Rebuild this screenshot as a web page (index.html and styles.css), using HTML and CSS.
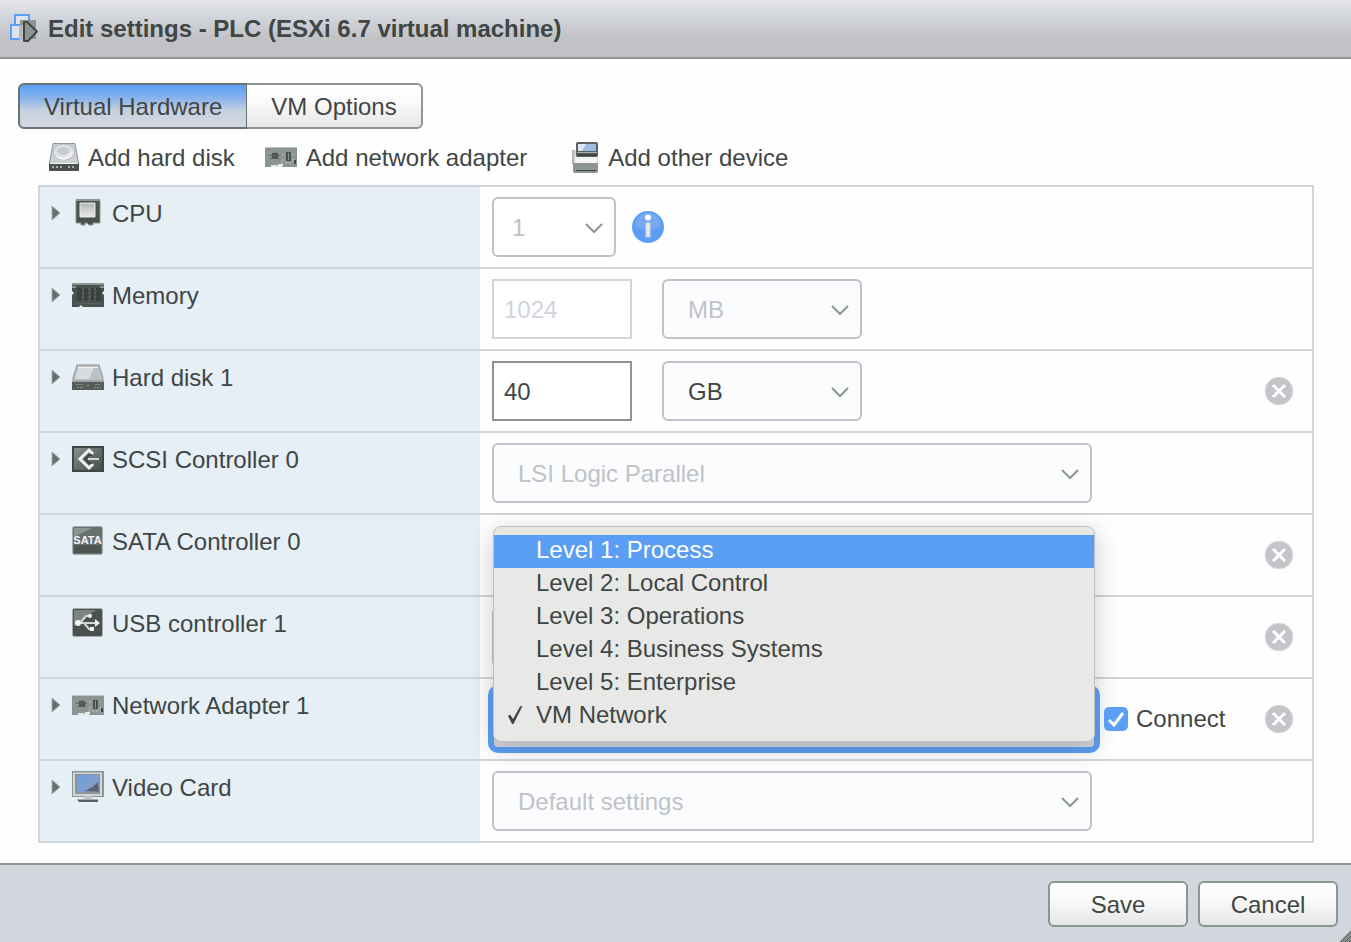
FILE: index.html
```html
<!DOCTYPE html>
<html lang="en">
<head>
<meta charset="utf-8">
<title>Edit settings - PLC</title>
<link rel="stylesheet" href="styles.css">
</head>
<body>
<svg class="sprite" aria-hidden="true">
  <defs>
    <linearGradient id="silver" x1="0" y1="0" x2="0" y2="1"><stop offset="0" stop-color="#b4b8b9"/><stop offset="1" stop-color="#e8e8e8"/></linearGradient>
    <linearGradient id="dark" x1="0" y1="0" x2="1" y2="1"><stop offset="0" stop-color="#8d9593"/><stop offset="1" stop-color="#3f4644"/></linearGradient>
    <linearGradient id="screen" x1="0" y1="0" x2="1" y2="1"><stop offset="0" stop-color="#6d9de0"/><stop offset=".6" stop-color="#7f9fcc"/><stop offset="1" stop-color="#6b7787"/></linearGradient>
    <symbol id="i-caret" viewBox="0 0 10 16"><path d="M1 1 9 8 1 15Z" fill="#686e6d" stroke="#a5abae"/></symbol>
    <symbol id="i-nic" viewBox="0 0 32 20">
      <path d="M0 0H32V20H17V18H13L12 20H0Z" fill="#8d9593"/><path d="M0 .5H32" stroke="#c0c3c6"/>
      <path d="M6 19H12M13 18H18" stroke="#e8e8e8" stroke-width="2"/>
      <path d="M7 6H13V11H7ZM21 5H26V14H21Z" fill="#4a514f"/><path d="M4 8.500H15M10 5V12M5 11.500H14" stroke="#5b6260"/>
      <path d="M18 6V8M18 12V14M28 7V8M28 12V15M16 16H30" stroke="#c0c3c6" stroke-dasharray="2 2"/><path d="M23.500 6V13" stroke="#8d9593"/><path d="M30 13V17" stroke="#3f4644" stroke-width="2"/>
    </symbol>
    <symbol id="i-disk" viewBox="0 0 32 26">
      <path d="M5 1H27L31 14V17H1V14Z" fill="#bdc0c4" stroke="#8d9593"/><path d="M7 3H22L17 15H3Z" fill="#d9dcdf"/><path d="M6 3.500H26" stroke="#f0f0f0"/>
      <path d="M0 17H32V26H0Z" fill="#555c5a"/><path d="M0 17.500H32" stroke="#9da3a3"/>
      <path d="M4 20.500H11M5 23.500H12M15 21.500H17M23 20.500H29M22 23.500H29" stroke="#8d9593" stroke-dasharray="2 1"/>
    </symbol>
  </defs>
</svg>

<div class="dialog">
  <header class="titlebar">
    <svg class="title-icon" width="30" height="30" viewBox="0 0 30 30" aria-hidden="true">
      <path d="M6 1H20V12H6Z" fill="#dfe4ea" stroke="#5a9ef6" stroke-width="2"/>
      <path d="M11 6H27V25H11Z" fill="#8d9593"/>
      <path d="M11 11H2V25H11" fill="#dfe6f0" stroke="#5a9ef6" stroke-width="2"/><path d="M4 12H13V24H4Z" fill="#dfe3e9"/><path d="M10 11H14V26H10Z" fill="#b4b9be"/>
      <path d="M15 8H18L28 17.500 19 27H15Z" fill="#8d9593" stroke="#3f4644" stroke-width="2" stroke-linejoin="round"/>
    </svg>
    <h1 class="title">Edit settings - PLC (ESXi 6.7 virtual machine)</h1>
  </header>

  <main class="content">
    <div class="tabs" role="tablist">
      <button class="tab tab-active" role="tab" aria-selected="true">Virtual Hardware</button>
      <button class="tab" role="tab" aria-selected="false">VM Options</button>
    </div>

    <div class="toolbar">
      <button class="tool">
        <svg width="30" height="28" viewBox="0 0 30 28" aria-hidden="true">
          <path d="M4 .5H26L29.500 20V21H.5V20Z" fill="#cdd0d5" stroke="#8d9593"/>
          <ellipse cx="15" cy="9" rx="11" ry="8" fill="#dfe0e2" stroke="#b4b8bb"/><path d="M8 14Q19 19 23 9" fill="none" stroke="#f4f4f4" stroke-width="2"/><ellipse cx="14" cy="8" rx="6" ry="4" fill="#c6c9cf"/>
          <path d="M0 20H30V28H0Z" fill="#4a514f"/><path d="M1 20.500H29" stroke="#f4f4f4"/><path d="M3 24H13M19 24H27" stroke="#a5abae" stroke-width="2" stroke-dasharray="2 2"/>
        </svg>
        <span>Add hard disk</span></button>
      <button class="tool tool-net"><svg width="32" height="20" aria-hidden="true"><use href="#i-nic"/></svg><span>Add network adapter</span></button>
      <button class="tool tool-other">
        <svg width="27" height="31" viewBox="0 0 27 31" aria-hidden="true">
          <path d="M1 8H26V30H1Z" fill="#d2d5da"/><path d="M1 8V22" stroke="#b4b8bb" stroke-width="2"/><path d="M3 15H25V21H3Z" fill="#f4f4f4"/>
          <path d="M1 21H26V29L25 31H2L1 29Z" fill="#8d9593"/><path d="M4 28.500H24" stroke="#3f4644"/>
          <rect x="4" y="0" width="22" height="15" rx="2" fill="#59605f"/><path d="M6 2H24V9H6Z" fill="#9dbbe6"/><path d="M6 2H14L10 9H6Z" fill="#dfe9f6"/><path d="M5 10.500H25" stroke="#a5abae"/><path d="M5 13H25" stroke="#3f4644" stroke-width="2"/>
        </svg>
        <span>Add other device</span></button>
    </div>

    <div class="hardware">
      <div class="row">
        <div class="name"><button class="expand" aria-label="Expand CPU"><svg width="10" height="16"><use href="#i-caret"/></svg></button>
          <span class="icon"><svg width="26" height="28" viewBox="0 0 26 28"><path d="M1 .5H25V24H18V26H14L12 24H10V26H6V24H1Z" fill="#4a514f" stroke="#8d9593"/><path d="M1 1H25" stroke="#8d9593" stroke-width="2"/><path d="M5 4H20V18H5Z" fill="url(#silver)" stroke="#e8e8e8"/></svg></span>
          <label for="cpu">CPU</label></div>
        <div class="value">
          <select id="cpu" class="select select-cpu" disabled><option>1</option></select>
          <button class="info" aria-label="CPU information"><svg width="32" height="32" viewBox="0 0 32 32"><circle cx="16" cy="16" r="16" fill="#5a9ef6"/><path d="M3 15A13 13 0 0 1 29 15Q16 22 3 15Z" fill="#76a9ef"/><circle cx="16" cy="6.500" r="3" fill="#fff"/><path d="M14 12H18V26H14Z" fill="#e8e8e8" stroke="#d2d5da"/></svg></button>
        </div>
      </div>

      <div class="row">
        <div class="name"><button class="expand" aria-label="Expand Memory"><svg width="10" height="16"><use href="#i-caret"/></svg></button>
          <span class="icon"><svg width="32" height="24" viewBox="0 0 32 24"><path d="M0 0H32V8L30 10 32 12V24H11L9 22 7 24H0V12L2 10 0 8Z" fill="#4a514f"/><path d="M0 1H32M0 4H4M28 4H32" stroke="#8d9593" stroke-width="2"/><path d="M5 5H10V18H5ZM12 5H16V18H12ZM19 5H22V18H19ZM24 5H29V18H24Z" fill="#3a413f"/><path d="M11 5V18M17.500 5V18M23 5V18" stroke="#6a7270" stroke-dasharray="2 2"/><path d="M3 20.500H30" stroke="#59605f"/></svg></span>
          <label for="memory">Memory</label></div>
        <div class="value">
          <input id="memory" class="field" type="text" value="1024" disabled>
          <select class="select select-unit" aria-label="Memory unit" disabled><option>MB</option></select>
        </div>
      </div>

      <div class="row">
        <div class="name"><button class="expand" aria-label="Expand Hard disk 1"><svg width="10" height="16"><use href="#i-caret"/></svg></button>
          <span class="icon"><svg width="32" height="26"><use href="#i-disk"/></svg></span>
          <label for="disk">Hard disk 1</label></div>
        <div class="value">
          <input id="disk" class="field" type="text" value="40">
          <select class="select select-unit" aria-label="Disk unit"><option>GB</option></select>
          <button class="remove" aria-label="Remove Hard disk 1"><svg width="30" height="30" viewBox="0 0 30 30"><circle cx="15" cy="15" r="14" fill="#c3c5c9" stroke="#e0e2e6"/><path d="M9 9 21 21M21 9 9 21" stroke="#fff" stroke-width="3"/></svg></button>
        </div>
      </div>

      <div class="row">
        <div class="name"><button class="expand" aria-label="Expand SCSI Controller 0"><svg width="10" height="16"><use href="#i-caret"/></svg></button>
          <span class="icon"><svg width="32" height="26" viewBox="0 0 32 26"><path d="M0 0H32V26H0Z" fill="url(#dark)"/><path d="M1 1H31V25H1Z" fill="none" stroke="#3f4644" stroke-width="2"/><path d="M21 8 17 4 8 13 17 22 21 18" fill="none" stroke="#f4f4f4" stroke-width="3"/><path d="M20 9 17 9 13 13 17 17H20" fill="none" stroke="#3f4644" stroke-width="2"/><path d="M16 13H27" stroke="#d2d5da" stroke-width="2"/></svg></span>
          <label for="scsi">SCSI Controller 0</label></div>
        <div class="value"><select id="scsi" class="select select-wide" disabled><option>LSI Logic Parallel</option></select></div>
      </div>

      <div class="row">
        <div class="name"><span class="expand"></span>
          <span class="icon"><svg width="32" height="30" viewBox="0 0 32 30"><rect x=".5" y=".5" width="30" height="28" rx="2" fill="#687070" stroke="#a5abae"/><path d="M2 2H20L4 10H2Z" fill="#8d9593"/><path d="M2 19H29V27H2Z" fill="#4e5553"/><text x="15.500" y="18" class="sata">SATA</text></svg></span>
          <span class="label">SATA Controller 0</span></div>
        <div class="value"><button class="remove" aria-label="Remove SATA Controller 0"><svg width="30" height="30" viewBox="0 0 30 30"><circle cx="15" cy="15" r="14" fill="#c3c5c9" stroke="#e0e2e6"/><path d="M9 9 21 21M21 9 9 21" stroke="#fff" stroke-width="3"/></svg></button></div>
      </div>

      <div class="row">
        <div class="name"><span class="expand"></span>
          <span class="icon"><svg width="32" height="30" viewBox="0 0 32 30"><rect x=".5" y=".5" width="30" height="28" rx="2" fill="#4a514f" stroke="#a5abae"/><path d="M2 2H24L2 18Z" fill="#7d8583"/><path d="M4 15H24M8 15 14 8H19M12 15 17 21H21" fill="none" stroke="#d2d5da" stroke-width="2"/><circle cx="6" cy="15" r="3" fill="#f4f4f4"/><circle cx="18" cy="8" r="2" fill="#f4f4f4"/><path d="M18 19H22V23H18ZM23 11 28 15 23 19Z" fill="#f4f4f4"/></svg></span>
          <label for="usb">USB controller 1</label></div>
        <div class="value"><select id="usb" class="select select-wide"></select>
          <button class="remove" aria-label="Remove USB controller 1"><svg width="30" height="30" viewBox="0 0 30 30"><circle cx="15" cy="15" r="14" fill="#c3c5c9" stroke="#e0e2e6"/><path d="M9 9 21 21M21 9 9 21" stroke="#fff" stroke-width="3"/></svg></button></div>
      </div>

      <div class="row">
        <div class="name"><button class="expand" aria-label="Expand Network Adapter 1"><svg width="10" height="16"><use href="#i-caret"/></svg></button>
          <span class="icon"><svg width="32" height="20"><use href="#i-nic"/></svg></span>
          <label for="network">Network Adapter 1</label></div>
        <div class="value">
          <div class="picker">
            <select id="network" class="select select-open"></select>
            <ul class="menu" role="listbox" aria-label="Network">
              <li class="option option-hot" role="option">Level 1: Process</li>
              <li class="option" role="option">Level 2: Local Control</li>
              <li class="option" role="option">Level 3: Operations</li>
              <li class="option" role="option">Level 4: Business Systems</li>
              <li class="option" role="option">Level 5: Enterprise</li>
              <li class="option" role="option" aria-selected="true"><svg class="tick" width="16" height="20" viewBox="0 0 16 20" aria-hidden="true"><path d="M1 11 3 9.500 6 14 13 1.500 15.500 1 6.500 19H5Z" fill="#3f4644"/></svg>VM Network</li>
            </ul>
          </div>
          <label class="connect"><input class="check" type="checkbox" checked>Connect</label>
          <button class="remove" aria-label="Remove Network Adapter 1"><svg width="30" height="30" viewBox="0 0 30 30"><circle cx="15" cy="15" r="14" fill="#c3c5c9" stroke="#e0e2e6"/><path d="M9 9 21 21M21 9 9 21" stroke="#fff" stroke-width="3"/></svg></button>
        </div>
      </div>

      <div class="row">
        <div class="name"><button class="expand" aria-label="Expand Video Card"><svg width="10" height="16"><use href="#i-caret"/></svg></button>
          <span class="icon"><svg width="32" height="32" viewBox="0 0 32 32"><path d="M0 0H32V26H0Z" fill="#8d9593"/><path d="M2 2.500H29V24H2Z" fill="none" stroke="#d2d5da" stroke-width="2"/><path d="M3 3H28V23H3Z" fill="#8d9593"/><path d="M5 4H27V21H5Z" fill="url(#screen)"/><path d="M13 20 21 16 26 11V20H13Z" fill="#59636c"/><path d="M12 25H20V28H12Z" fill="#c0c3c6"/><path d="M5 28.500H26V31H7Z" fill="#59605f"/><path d="M7 28.500H25" stroke="#a5abae"/></svg></span>
          <label for="video">Video Card</label></div>
        <div class="value"><select id="video" class="select select-wide" disabled><option>Default settings</option></select></div>
      </div>
    </div>
  </main>

  <footer class="footer">
    <button class="action">Save</button>
    <button class="action">Cancel</button>
    <svg class="grip" width="12" height="12" viewBox="0 0 12 12" aria-hidden="true"><path d="M12 0V12H0Z" fill="#8d9593"/><path d="M2 12 12 2M6 12 12 6M10 12 12 10" stroke="#3f4644" stroke-dasharray="2 1"/></svg>
  </footer>
</div>
</body>
</html>
```
FILE: styles.css
```css
* { box-sizing: border-box; }

body {
  margin: 0;
  background: #fff;
  color: #3f4644;
  font: 24px/28px "Liberation Sans", Arial, sans-serif;
}

button, input, select { font: inherit; color: inherit; }
button { padding: 0; border: 0; background: none; }
svg { display: block; flex: none; }
.sprite { position: absolute; width: 0; height: 0; }

.dialog {
  display: flex;
  flex-direction: column;
  min-height: 100vh;
  background: #fefefe;
}

.titlebar {
  display: flex;
  align-items: center;
  gap: 9px;
  height: 59px;
  padding: 0 9px;
  border-bottom: 2px solid #8d9593;
  background: linear-gradient(#e4e5e6, #d2d5dc 30%, #c2c3c7 65%, #c0c1c5);
}
.title { margin: 0; font-size: 24px; font-weight: bold; }

.content { flex: 1; padding: 24px 37px 20px 38px; }

.tabs { display: flex; margin-left: -20px; }
.tab {
  height: 46px;
  padding: 2px 24px 0;
  border: 2px solid #8d9593;
  border-left: 0;
  border-radius: 0 6px 6px 0;
  background: linear-gradient(#fff, #fafafa 40%, #e6e6e6);
}
.tab-active {
  border: 2px solid #6a7275;
  border-right-width: 1px;
  border-radius: 6px 0 0 6px;
  background: linear-gradient(#5a9ef6, #8fb6ea 35%, #c6d0df 60%, #d4d9e1);
}

.toolbar { display: flex; align-items: center; height: 56px; padding-left: 11px; }
.tool { display: flex; align-items: center; gap: 9px; white-space: nowrap; }
.tool span { padding-top: 2px; }
.tool-net { margin-left: 30px; }
.tool-other { margin-left: 45px; }

.hardware { border: 2px solid #d0d4dc; border-bottom: 0; }
.row {
  display: grid;
  grid-template-columns: 440px 1fr;
  height: 82px;
  border-bottom: 2px solid #d0d4dc;
}
.name {
  display: flex;
  align-items: center;
  height: 80px;
  padding: 10px 0 38px 11px;
  background: #e6eef6;
}
.name label, .label { padding-top: 2px; }
.expand { flex: none; width: 21px; }
.icon {
  display: flex;
  align-items: center;
  justify-content: center;
  width: 32px;
  height: 32px;
  margin-right: 8px;
}
.sata {
  font: bold 11px "Liberation Sans", Arial, sans-serif;
  fill: #f4f4f4;
  text-anchor: middle;
}

.value { display: flex; align-items: center; padding: 0 18px 0 12px; }

.field {
  width: 140px;
  height: 60px;
  margin-right: 30px;
  padding: 2px 10px 0;
  border: 2px solid #8d9593;
  border-radius: 0;
  background: #fff;
}
.field:disabled { border-color: #d0d4dc; color: #d0d4dc; }

.select {
  height: 60px;
  padding: 2px 40px 0 24px;
  border: 2px solid #c0c2c9;
  border-radius: 6px;
  appearance: none;
  background: #fbfcfd url("data:image/svg+xml,%3Csvg xmlns='http://www.w3.org/2000/svg' width='18' height='14'%3E%3Cpath d='M1 4 9 12 17 4' fill='none' stroke='%238d9593' stroke-width='2'/%3E%3C/svg%3E") no-repeat right 11px center;
}
.select:disabled { color: #c0c2c9; opacity: 1; }
.select-cpu { width: 124px; padding-left: 18px; background-color: #fff; }
.select-unit { width: 200px; }
.select-wide { width: 600px; }
.select-open {
  display: block;
  width: 100%;
  border-color: #5a9ef6;
  background: #d6d8dc;
  box-shadow: 0 0 0 4px #5a9ef6;
}

.info { margin-left: 16px; }
.remove { margin-left: auto; }

.picker { position: relative; width: 604px; }
.menu {
  position: absolute;
  z-index: 1;
  bottom: 7px;
  left: 1px;
  width: 602px;
  margin: 0;
  padding: 8px 0;
  border: 1px solid #bfc1c5;
  border-radius: 8px;
  background: #e8e8e7;
  box-shadow: 0 6px 24px rgba(60, 70, 80, 0.28);
  list-style: none;
}
.option { position: relative; padding: 0 0 3px 42px; line-height: 30px; }
.option-hot { background: #5a9ef6; color: #fff; }
.tick { position: absolute; top: 5px; left: 13px; }

.connect { position: relative; z-index: 2; display: flex; align-items: center; gap: 8px; margin-left: 8px; }
.check {
  width: 24px;
  height: 24px;
  margin: 0;
  border-radius: 5px;
  appearance: none;
  background: #fff;
}
.check:checked {
  background: #5a9ef6 url("data:image/svg+xml,%3Csvg xmlns='http://www.w3.org/2000/svg' width='24' height='24'%3E%3Cpath d='M5 13 10 18 19 6' fill='none' stroke='white' stroke-width='3'/%3E%3C/svg%3E") no-repeat center;
}

.footer {
  position: relative;
  display: flex;
  justify-content: flex-end;
  gap: 10px;
  padding: 16px 13px 15px;
  border-top: 2px solid #8d9593;
  background: #d2d6dd;
}
.action {
  width: 140px;
  height: 46px;
  padding-top: 2px;
  border: 2px solid #8d9593;
  border-radius: 6px;
  background: linear-gradient(#fff, #fafafa 40%, #e6e6e6);
}
.grip { position: absolute; right: 0; bottom: 0; }
```
